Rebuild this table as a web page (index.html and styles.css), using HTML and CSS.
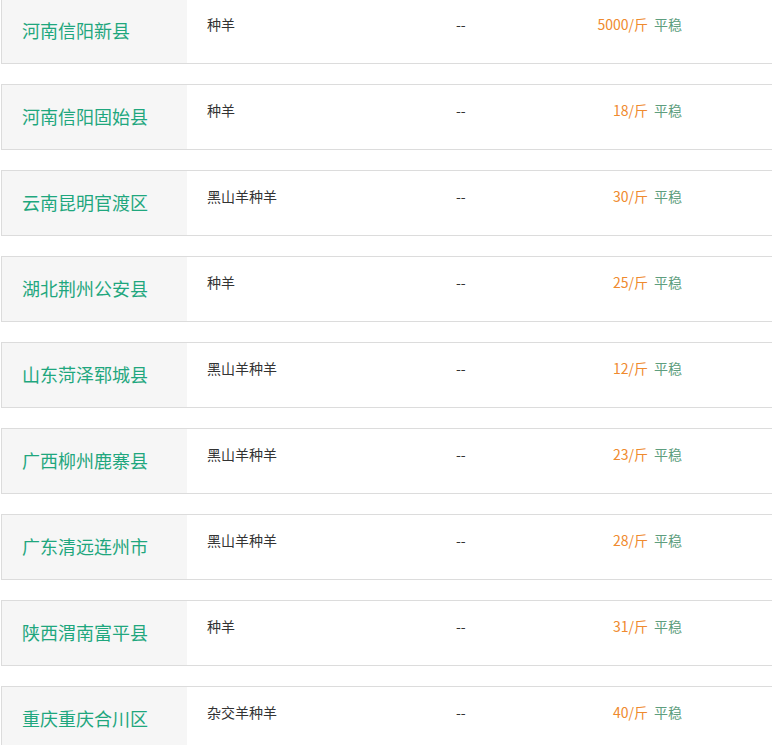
FILE: index.html
```html
<!DOCTYPE html>
<html lang="zh-CN">
<head>
<meta charset="utf-8">
<link rel="stylesheet" href="styles.css">
</head>
<body>
<div class="list">
  <div class="row"><div class="area">河南信阳新县</div><div class="kind">种羊</div><div class="spec">--</div><div class="price">5000/斤</div><div class="trend">平稳</div></div>
  <div class="row"><div class="area">河南信阳固始县</div><div class="kind">种羊</div><div class="spec">--</div><div class="price">18/斤</div><div class="trend">平稳</div></div>
  <div class="row"><div class="area">云南昆明官渡区</div><div class="kind">黑山羊种羊</div><div class="spec">--</div><div class="price">30/斤</div><div class="trend">平稳</div></div>
  <div class="row"><div class="area">湖北荆州公安县</div><div class="kind">种羊</div><div class="spec">--</div><div class="price">25/斤</div><div class="trend">平稳</div></div>
  <div class="row"><div class="area">山东菏泽郓城县</div><div class="kind">黑山羊种羊</div><div class="spec">--</div><div class="price">12/斤</div><div class="trend">平稳</div></div>
  <div class="row"><div class="area">广西柳州鹿寨县</div><div class="kind">黑山羊种羊</div><div class="spec">--</div><div class="price">23/斤</div><div class="trend">平稳</div></div>
  <div class="row"><div class="area">广东清远连州市</div><div class="kind">黑山羊种羊</div><div class="spec">--</div><div class="price">28/斤</div><div class="trend">平稳</div></div>
  <div class="row"><div class="area">陕西渭南富平县</div><div class="kind">种羊</div><div class="spec">--</div><div class="price">31/斤</div><div class="trend">平稳</div></div>
  <div class="row"><div class="area">重庆重庆合川区</div><div class="kind">杂交羊种羊</div><div class="spec">--</div><div class="price">40/斤</div><div class="trend">平稳</div></div>
</div>
</body>
</html>
```
FILE: styles.css
```css
html, body {
  margin: 0;
  padding: 0;
  background: #fff;
  overflow: hidden;
}
body {
  font-family: "Microsoft YaHei", "Noto Sans CJK SC", "Noto Sans", sans-serif;
  color: #333;
}
.list {
  margin-top: -2px;
  padding-left: 1px;
}
.row {
  display: flex;
  height: 64px;
  border: 1px solid #dcdcdc;
  border-right: 0;
  margin-bottom: 20px;
  font-size: 14px;
  line-height: 20px;
}
.area {
  width: 165px;
  padding-left: 20px;
  background: #f6f6f6;
  color: #1fa77e;
  font-size: 18px;
  display: flex;
  align-items: center;
  padding-bottom: 3px;
}
.kind, .spec, .price, .trend {
  padding-top: 15px;
}
.kind {
  width: 229px;
  padding-left: 20px;
}
.spec {
  width: 120px;
  padding-left: 20px;
}
.price {
  width: 72px;
  text-align: right;
  color: #ef8a2e;
}
.trend {
  padding-left: 6px;
  color: #5e9e7e;
}
```
